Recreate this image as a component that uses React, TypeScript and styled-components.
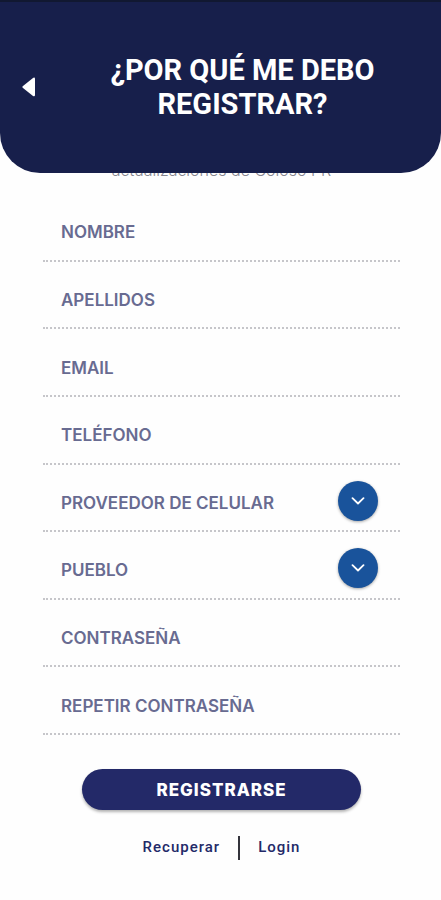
import React, { useId } from "react";
import styled, { createGlobalStyle } from "styled-components";

const navy = "#171f4b";
const ink = "#232968";

const GlobalStyle = createGlobalStyle`
  *, *::before, *::after { box-sizing: border-box; }
  body { margin: 0; background: #fefefe; }
`;

const Page = styled.div`
  min-height: 100vh;
  display: flex;
  flex-direction: column;
  font-family: Inter, "Noto Sans", sans-serif;
  background: #fefefe;
`;

const Header = styled.header`
  position: sticky;
  top: 0;
  z-index: 1;
  display: grid;
  grid-template-columns: 58px 1fr 14px;
  align-items: center;
  min-height: 173px;
  padding-bottom: 2px;
  border-top: 2px solid #111831;
  border-radius: 0 0 40px 40px;
  background: ${navy};
`;

const BackButton = styled.button`
  display: flex;
  justify-content: center;
  align-items: center;
  height: 44px;
  padding: 0;
  border: 0;
  background: none;
  cursor: pointer;
`;

const Title = styled.h1`
  max-width: 300px;
  margin: 0 auto;
  color: #fff;
  font: 700 29px/34px Roboto, sans-serif;
  text-align: center;
`;

const Content = styled.main`
  display: flex;
  flex-direction: column;
  padding: 0 41px 0 43px;
`;

const Intro = styled.p`
  margin: -15px 0 0;
  color: #85858f;
  font-size: 16px;
  font-weight: 300;
  line-height: 24px;
  text-align: center;
`;

const Form = styled.form`
  display: flex;
  flex-direction: column;
`;

const Fields = styled.div`
  display: grid;
  grid-auto-rows: 1fr;
  min-height: 541px;
  margin-top: 12px;
`;

const Field = styled.div`
  display: grid;
  grid-template-columns: auto 1fr 40px;
  align-items: center;
  column-gap: 12px;
  padding: 11px 22px 0 18px;
  border-bottom: 2px dotted #c6c6ca;
`;

const Label = styled.label`
  color: #686b91;
  font-size: 17px;
  font-weight: 600;
  line-height: 24px;
`;

const Input = styled.input`
  grid-column: 2 / 4;
  width: 100%;
  min-width: 0;
  height: 40px;
  border: 0;
  outline: 0;
  background: transparent;
  color: ${ink};
  font: inherit;
`;

const Select = styled.select`
  grid-area: 1 / 2 / 2 / 4;
  width: 100%;
  height: 40px;
  border: 0;
  outline: 0;
  appearance: none;
  background: transparent;
  font: inherit;
  color: ${ink};
  cursor: pointer;
`;

const Chevron = styled.span`
  grid-area: 1 / 3;
  display: flex;
  align-items: center;
  justify-content: center;
  width: 40px;
  height: 40px;
  margin-bottom: 4px;
  border-radius: 50%;
  background: #19539b;
  box-shadow: 0 1px 3px rgba(0, 0, 0, 0.35);
  pointer-events: none;
`;

const Submit = styled.button`
  align-self: center;
  width: 78%;
  height: 41px;
  margin-top: 34px;
  padding: 0;
  border: 0;
  border-radius: 21px;
  background: ${ink};
  box-shadow: 0 2px 3px rgba(0, 0, 0, 0.3);
  color: #fff;
  font: 800 17px/24px Inter, sans-serif;
  letter-spacing: 1px;
  cursor: pointer;
`;

const Links = styled.nav`
  display: flex;
  justify-content: center;
  align-items: center;
  gap: 18px;
  margin-top: 26px;
`;

const TextLink = styled.a`
  padding-bottom: 2px;
  color: ${ink};
  font: 500 15px/20px Roboto, sans-serif;
  letter-spacing: 1px;
  text-decoration: none;
`;

const Divider = styled.span`
  width: 2px;
  height: 24px;
  background: #34343c;
`;

function TextField({ label, type = "text" }: { label: string; type?: string }) {
  const id = useId();
  return (
    <Field>
      <Label htmlFor={id}>{label}</Label>
      <Input id={id} type={type} />
    </Field>
  );
}

function SelectField({ label, options }: { label: string; options: string[] }) {
  const id = useId();
  return (
    <Field>
      <Label htmlFor={id}>{label}</Label>
      <Select id={id} defaultValue="">
        <option value="" />
        {options.map((option) => (
          <option key={option}>{option}</option>
        ))}
      </Select>
      <Chevron aria-hidden="true">
        <svg width="14" height="8" viewBox="0 0 14 8" fill="none">
          <path d="M1.5 1.2 7 6.5l5.5-5.3" stroke="#fff" strokeWidth="1.8" strokeLinecap="round" strokeLinejoin="round" />
        </svg>
      </Chevron>
    </Field>
  );
}

export default function App() {
  return (
    <Page>
      <GlobalStyle />
      <Header>
        <BackButton type="button" aria-label="Volver">
          <svg width="14" height="20" viewBox="0 0 14 20" fill="#fff">
            <path d="M.7 9.2 11 .9Q13 0 13 2v16q0 2-2 1L.7 10.8Q0 10 .7 9.2Z" />
          </svg>
        </BackButton>
        <Title>¿POR QUÉ ME DEBO REGISTRAR?</Title>
      </Header>
      <Content>
        <Intro>actualizaciones de Coloso PR</Intro>
        <Form onSubmit={(event) => event.preventDefault()}>
          <Fields>
            <TextField label="NOMBRE" />
            <TextField label="APELLIDOS" />
            <TextField label="EMAIL" type="email" />
            <TextField label="TELÉFONO" type="tel" />
            <SelectField label="PROVEEDOR DE CELULAR" options={[]} />
            <SelectField label="PUEBLO" options={[]} />
            <TextField label="CONTRASEÑA" type="password" />
            <TextField label="REPETIR CONTRASEÑA" type="password" />
          </Fields>
          <Submit type="submit">REGISTRARSE</Submit>
        </Form>
        <Links>
          <TextLink href="#recuperar">Recuperar</TextLink>
          <Divider />
          <TextLink href="#login">Login</TextLink>
        </Links>
      </Content>
    </Page>
  );
}
